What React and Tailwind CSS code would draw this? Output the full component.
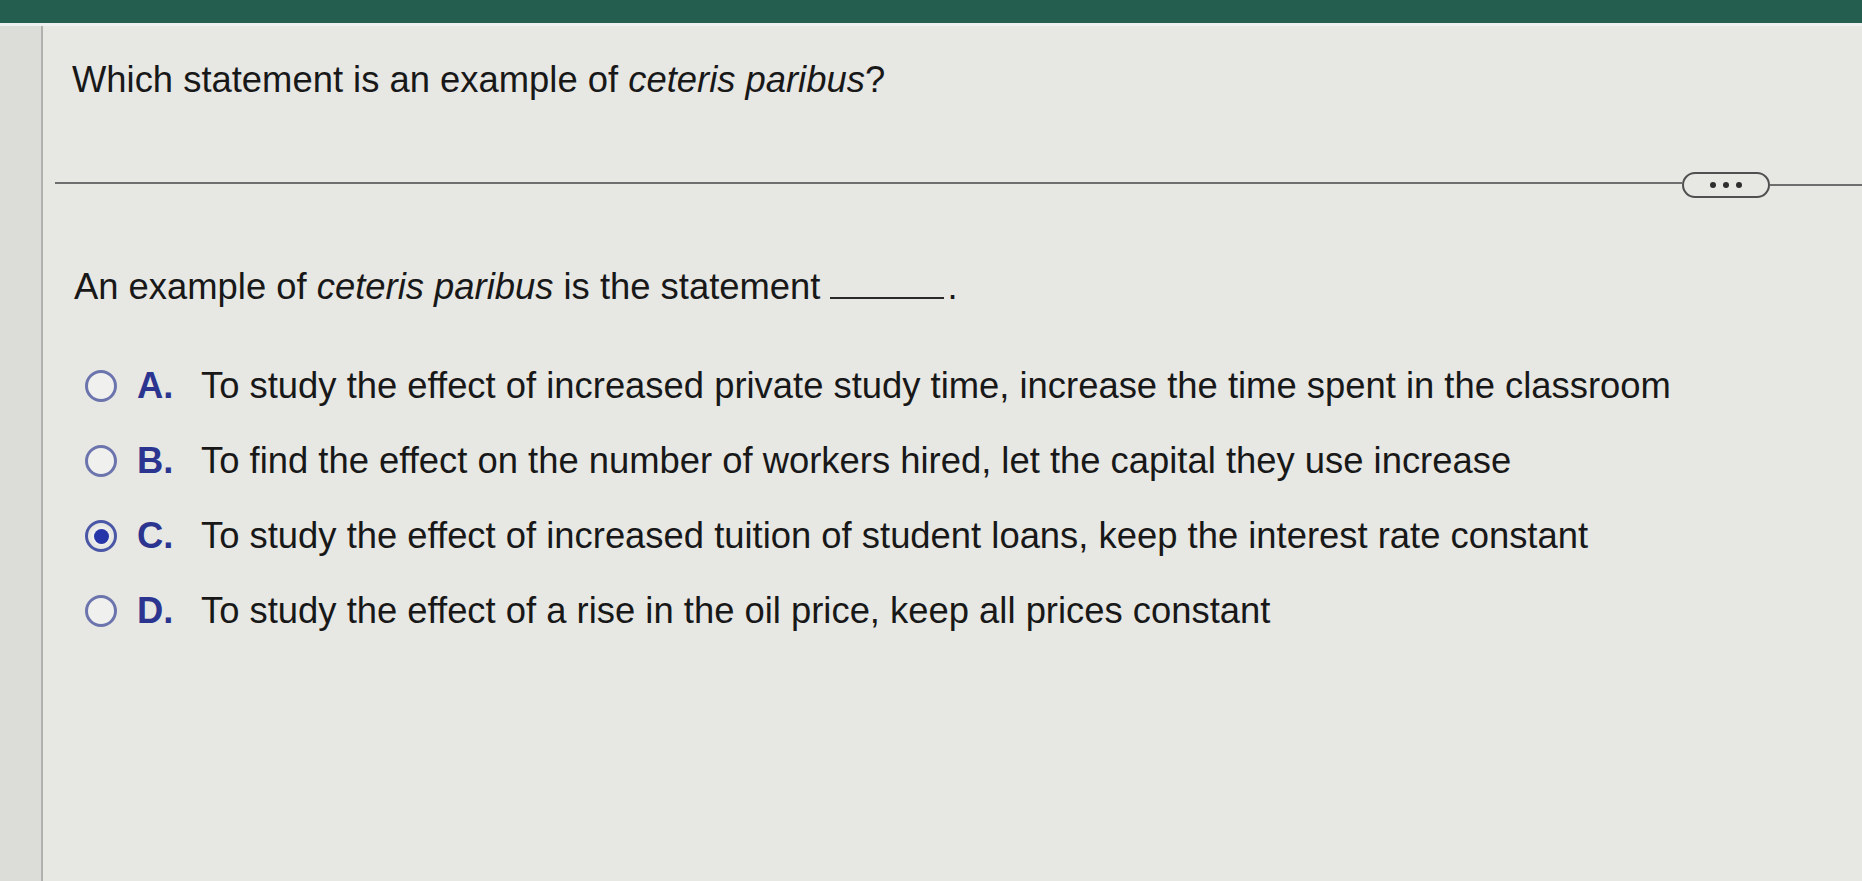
export default function App() {
  const options = [
    { key: "A", text: "To study the effect of increased private study time, increase the time spent in the classroom" },
    { key: "B", text: "To find the effect on the number of workers hired, let the capital they use increase" },
    { key: "C", text: "To study the effect of increased tuition of student loans, keep the interest rate constant", checked: true },
    { key: "D", text: "To study the effect of a rise in the oil price, keep all prices constant" },
  ];

  return (
    <div className="w-[1862px] h-[881px] overflow-hidden flex flex-col bg-[#e7e7e4] text-[#181818] font-['Liberation_Sans',Arial,sans-serif]">
      <div className="h-[23px] bg-[#245e4f]" />
      <div className="h-[3px] bg-[#eef0ef]" />
      <div className="flex flex-1">
        <div className="w-[43px] bg-[#dcdcd9] border-r-2 border-[#b0b0ae]" />
        <div className="flex-1 flex flex-col">
          {/* question */}
          <div className="pl-[29px] pt-[35px] text-[36.4px] leading-[38px]">
            Which statement is an example of <i>ceteris paribus</i>?
          </div>

          {/* divider with more button */}
          <div className="flex items-center mt-[68px] pl-[12px]">
            <div className="flex-1 h-[2px] bg-[#6e6e6e]" />
            <div className="w-[88px] h-[26px] mt-[5px] rounded-full border-2 border-[#505050] flex items-center justify-center gap-[7px]">
              <span className="w-[6px] h-[6px] rounded-full bg-[#2e2e2e]" />
              <span className="w-[6px] h-[6px] rounded-full bg-[#2e2e2e]" />
              <span className="w-[6px] h-[6px] rounded-full bg-[#2e2e2e]" />
            </div>
            <div className="w-[92px] h-[2px] mt-[5px] bg-[#6e6e6e]" />
          </div>

          {/* prompt */}
          <div className="pl-[31px] mt-[70px] text-[36.4px] leading-[38px] flex items-end">
            <span>An example of <i>ceteris paribus</i> is the statement</span>
            <span className="ml-[10px] w-[114px] border-b-2 border-[#2a2a2a] mb-[7px]" />
            <span className="ml-[3px]">.</span>
          </div>

          {/* options */}
          <div className="flex flex-col gap-[37px] mt-[61px] pl-[42px]">
            {options.map((o) => (
              <div key={o.key} className="flex items-center h-[38px] text-[36.4px] leading-[38px]">
                {o.checked ? (
                  <span className="w-[32px] h-[32px] rounded-full border-[3px] border-[#4a56a6] flex items-center justify-center">
                    <span className="w-[20px] h-[20px] rounded-full bg-[#eeeeee] flex items-center justify-center">
                      <span className="w-[15px] h-[15px] rounded-full bg-[#2636a8]" />
                    </span>
                  </span>
                ) : (
                  <span className="w-[32px] h-[32px] rounded-full border-[3px] border-[#6c74ad] bg-[#f0f0ee]" />
                )}
                <span className="ml-[20px] w-[64px] font-bold text-[#2b3590]">{o.key}.</span>
                <span>{o.text}</span>
              </div>
            ))}
          </div>
        </div>
      </div>
    </div>
  );
}
